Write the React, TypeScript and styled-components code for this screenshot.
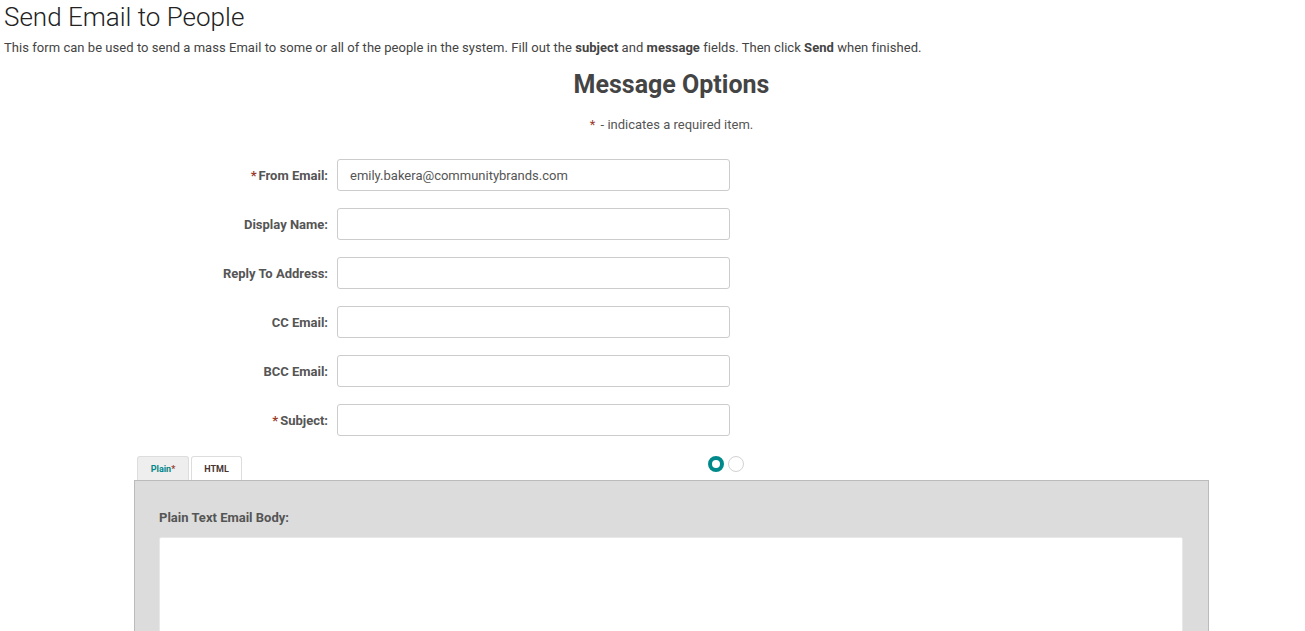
import React from "react";
import styled, { createGlobalStyle } from "styled-components";

const Global = createGlobalStyle`
  html, body { margin: 0; padding: 0; background: #fff; }
  body { font-family: Roboto, "Liberation Sans", Arial, sans-serif; color: #555; overflow: hidden; }
  * { box-sizing: border-box; }
`;

const Page = styled.div`
  padding: 0 4px;
  width: 1305px;
  height: 631px;
  overflow: hidden;
`;

const Title = styled.h1`
  margin: 0;
  padding-top: 1px;
  font-size: 26px;
  font-weight: 300;
  color: #222;
  line-height: 32px;
`;

const Intro = styled.p`
  margin: 7px 0 0;
  font-size: 13px;
  line-height: 16px;
  letter-spacing: 0.04px;
  color: #444;
  b { font-weight: 700; color: #444; }
`;

const Main = styled.div`
  margin-left: 130px;
  width: 1075px;
`;

const SectionTitle = styled.h2`
  margin: 14px 0 0;
  text-align: center;
  font-size: 25px;
  line-height: 30px;
  font-weight: 700;
  color: #444;
`;

const Note = styled.p`
  margin: 17px 0 0;
  text-align: center;
  font-size: 13px;
  line-height: 16px;
  color: #555;
`;

const Star = styled.span`
  color: #9b3b2b;
  margin-right: 2px;
`;

const Form = styled.div`
  margin-top: 26px;
  display: flex;
  flex-direction: column;
  gap: 17px;
`;

const Row = styled.div`
  display: grid;
  grid-template-columns: 194px 393px;
  column-gap: 9px;
  align-items: center;
`;

const Label = styled.label`
  text-align: right;
  font-size: 13px;
  font-weight: 700;
  color: #555;
`;

const Input = styled.input`
  height: 32px;
  width: 393px;
  border: 1px solid #ccc;
  border-radius: 3px;
  padding: 0 12px;
  font-family: Roboto, "Liberation Sans", Arial, sans-serif;
  font-size: 13px;
  color: #555;
  outline: none;
`;

const TabBar = styled.div`
  margin-top: 20px;
  display: flex;
  align-items: flex-end;
  position: relative;
  height: 24px;
`;

const Tabs = styled.div`
  display: flex;
  gap: 2px;
  padding-left: 3px;
`;

const Tab = styled.div<{ $active?: boolean }>`
  height: 24px;
  width: ${(p) => (p.$active ? "52px" : "51px")};
  border: 1px solid #ddd;
  border-bottom: none;
  border-radius: 3px 3px 0 0;
  background: ${(p) => (p.$active ? "#eee" : "#fff")};
  color: ${(p) => (p.$active ? "#00878a" : "#4a3434")};
  font-size: 9px;
  font-weight: 700;
  display: flex;
  align-items: center;
  justify-content: center;
  span { color: #9b3b2b; }
`;

const Dots = styled.div`
  position: absolute;
  left: 574px;
  top: 0;
  display: flex;
  gap: 4px;
`;

const Dot = styled.div<{ $on?: boolean }>`
  width: 16px;
  height: 16px;
  border-radius: 50%;
  border: ${(p) => (p.$on ? "4px solid #00898b" : "1px solid #d2d2d2")};
  background: #fff;
`;

const Panel = styled.div`
  background: #dcdcdc;
  border: 1px solid #bbb;
  padding: 29px 25px 0 24px;
  height: 200px;
`;

const PanelLabel = styled.div`
  font-size: 13px;
  font-weight: 700;
  color: #555;
  line-height: 16px;
`;

const TextArea = styled.textarea`
  display: block;
  margin-top: 11px;
  width: 100%;
  height: 200px;
  border: 1px solid #e8e8e8;
  border-radius: 2px;
  background: #fff;
  resize: none;
  outline: none;
`;

const fields = [
  { label: "From Email:", req: true, value: "emily.bakera@communitybrands.com" },
  { label: "Display Name:" },
  { label: "Reply To Address:" },
  { label: "CC Email:" },
  { label: "BCC Email:" },
  { label: "Subject:", req: true },
];

export default function App() {
  return (
    <>
      <Global />
      <Page>
        <Title>Send Email to People</Title>
        <Intro>
          This form can be used to send a mass Email to some or all of the people in the system. Fill out the{" "}
          <b>subject</b> and <b>message</b> fields. Then click <b>Send</b> when finished.
        </Intro>
        <Main>
          <SectionTitle>Message Options</SectionTitle>
          <Note>
            <Star>*</Star> - indicates a required item.
          </Note>
          <Form>
            {fields.map((f) => (
              <Row key={f.label}>
                <Label>
                  {f.req && <Star>*</Star>}
                  {f.label}
                </Label>
                <Input defaultValue={f.value ?? ""} />
              </Row>
            ))}
          </Form>
          <TabBar>
            <Tabs>
              <Tab $active>
                Plain<span>*</span>
              </Tab>
              <Tab>HTML</Tab>
            </Tabs>
            <Dots>
              <Dot $on />
              <Dot />
            </Dots>
          </TabBar>
          <Panel>
            <PanelLabel>Plain Text Email Body:</PanelLabel>
            <TextArea />
          </Panel>
        </Main>
      </Page>
    </>
  );
}
